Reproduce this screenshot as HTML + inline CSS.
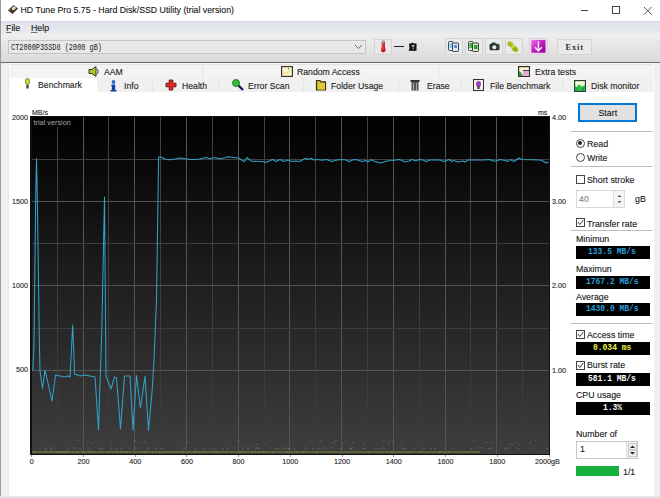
<!DOCTYPE html>
<html><head><meta charset="utf-8">
<style>
*{margin:0;padding:0;box-sizing:border-box}
html,body{width:660px;height:498px;overflow:hidden;background:#f0f0f0;font-family:"Liberation Sans",sans-serif;font-size:11px;color:#000}
.rp,.tab,.lbl,#title .t,#menu span{-webkit-text-stroke:0.2px rgba(40,40,40,0.6)}
.a{position:absolute}
#lb{left:0;top:0;width:1px;height:498px;background:#9a9a9a}
#title{left:1px;top:0;width:659px;height:21px;background:#fff}
#title .t{left:19.5px;top:5px;font-size:8.75px;color:#111;white-space:nowrap}
#menu{left:1px;top:21px;width:659px;height:15px;background:linear-gradient(#e0e4ea,#e6e9ee 70%,#eff0f2);border-top:1px solid #d6d9e2}
#menu span{position:absolute;top:0px;font-size:8.8px;color:#111}
#tool{left:1px;top:36px;width:659px;height:26px;background:linear-gradient(#ededed,#dadada)}
#darkline{left:1px;top:62px;width:659px;height:1px;background:#6a6a6a}
#combo{left:8px;top:40px;width:358px;height:14px;background:#e8e8e8;border:1px solid #c4c4c4}
.btn{position:absolute;background:#eaeaea;border:1px solid #d4d4d4}
#content{left:9px;top:92px;width:645px;height:404px;background:#fff}
.tabrow{position:absolute;background:#f3f3f3}
.tab{position:absolute;font-size:8.7px;color:#1a1a1a;white-space:nowrap}
.sep{position:absolute;width:1px;background:#e4e4e4}
.lbl{position:absolute;font-size:7.2px;color:#1e1e1e;white-space:nowrap}
.rp{position:absolute;margin-top:2px;font-size:8.8px;color:#111;white-space:nowrap}
.hr{position:absolute;left:571px;width:81px;height:1px;background:#bdbdbd}
.cb{position:absolute;width:9px;height:9px;border:1px solid #444;background:#fff}
.box{position:absolute;left:576px;width:74px;height:13px;background:#000}
.mono{position:absolute;font-family:"Liberation Mono",monospace;font-weight:bold;font-size:9.4px;transform:scaleX(0.85);-webkit-text-stroke:0px;white-space:nowrap;transform-origin:0 0}
</style></head><body>
<div class="a" id="lb"></div>
<div class="a" id="title">
  <svg class="a" style="left:0;top:0" width="20" height="20" viewBox="0 0 20 20"><path d="M7 10.5 L12.5 5 L17 8.5 L11.5 14 Z" fill="#3a3030"/><ellipse cx="12.8" cy="8.3" rx="2.2" ry="1.7" fill="#e6deb0" transform="rotate(-40 12.8 8.3)"/><path d="M7.5 10.5 L9.5 8.5 L10.5 11.5Z" fill="#6a5a40"/></svg>
  <div class="a t">HD Tune Pro 5.75 - Hard Disk/SSD Utility (trial version)</div>
  <div class="a" style="left:580px;top:10px;width:7px;height:1px;background:#444"></div>
  <div class="a" style="left:611px;top:6px;width:8px;height:8px;border:1px solid #444"></div>
  <svg class="a" style="left:642px;top:6px" width="9" height="9" viewBox="0 0 9 9"><path d="M1 1 L8.5 8.5 M8.5 1 L1 8.5" stroke="#444" stroke-width="0.9"/></svg>
</div>
<div class="a" id="menu">
  <span style="left:5px;top:1px"><u>F</u>ile</span>
  <span style="left:30px;top:1px"><u>H</u>elp</span>
</div>
<div class="a" id="tool"></div>
<div class="a" id="combo">
  <div class="a" style="left:2px;top:1px;font-family:'Liberation Mono',monospace;font-weight:normal;font-size:9.5px;color:#1a1a1a;white-space:nowrap;transform:scaleX(0.725);transform-origin:0 0">CT2000P3SSD8 (2000 gB)</div>
  <svg class="a" style="left:345px;top:3px" width="9" height="6" viewBox="0 0 9 6"><path d="M1 1 L4.5 4.5 L8 1" fill="none" stroke="#666" stroke-width="1"/></svg>
</div>
<div class="btn" style="left:374px;top:39px;width:18px;height:16px;background:#ebe8ec">
  <svg class="a" style="left:-1px;top:-1px" width="18" height="16" viewBox="374 39 18 16"><rect x="381.6" y="40.5" width="3.4" height="9" rx="1.7" fill="#d02828"/><rect x="382.2" y="40.8" width="2.2" height="2.6" fill="#88b8b0"/><circle cx="383.3" cy="50" r="2.4" fill="#c81c1c"/><rect x="382.4" y="44" width="0.8" height="6" fill="#f06060"/></svg>
</div>
<div class="a" style="left:394px;top:46px;width:10px;height:1px;background:#222"></div>
<svg class="a" style="left:406px;top:41px" width="12" height="11" viewBox="406 41 12 11"><path d="M409 43.5 H416.5 V50.8 H408.5 L409.5 48.5 Z" fill="#111"/><rect x="411.5" y="42.8" width="2" height="1.5" fill="#111"/><rect x="411.8" y="45" width="2.5" height="1.6" fill="#ddd"/><rect x="412.5" y="47.5" width="1.4" height="1.4" fill="#bbb"/></svg>
<div class="btn" style="left:445px;top:38px;width:18px;height:17px">
  <svg class="a" style="left:-1px;top:-1px" width="18" height="17" viewBox="445 38 18 17"><rect x="448.5" y="41.5" width="4.5" height="9" rx="0.8" fill="#d8f0fa" stroke="#4a4a50"/><rect x="449.5" y="43" width="2.5" height="5" fill="#8ccbe8"/><rect x="452.5" y="43" width="6" height="8.5" rx="0.8" fill="#dfe6f6" stroke="#3e3e46"/><rect x="454" y="45" width="3" height="3" fill="#5a8ad0"/></svg>
</div>
<div class="btn" style="left:465px;top:38px;width:18px;height:17px">
  <svg class="a" style="left:-1px;top:-1px" width="18" height="17" viewBox="465 38 18 17"><rect x="468.5" y="41.5" width="4.5" height="9" rx="0.8" fill="#d6efd0" stroke="#4a4a4a"/><rect x="469.5" y="43" width="2.5" height="5" fill="#3fb03a"/><rect x="472.5" y="43" width="6" height="8.5" rx="0.8" fill="#dde8cc" stroke="#3a3a3a"/><rect x="474" y="45" width="3.5" height="4" fill="#2f9a3a"/></svg>
</div>
<div class="btn" style="left:485px;top:38px;width:18px;height:17px">
  <svg class="a" style="left:-1px;top:-1px" width="18" height="17" viewBox="485 38 18 17"><path d="M491.2 44 Q491.5 42.2 493.5 42.2 Q495.8 42.2 496.2 44Z" fill="#2e3b33"/><rect x="489.5" y="43.8" width="10" height="6.4" rx="1.2" fill="#2b3a31"/><circle cx="494.3" cy="47.2" r="2" fill="#e8efe8"/><rect x="497.5" y="44.5" width="1.5" height="1" fill="#6a8a70"/></svg>
</div>
<div class="btn" style="left:505px;top:38px;width:18px;height:17px">
  <svg class="a" style="left:-1px;top:-1px" width="18" height="17" viewBox="505 38 18 17"><ellipse cx="510.5" cy="44.3" rx="3.4" ry="2.6" fill="#b4c020" transform="rotate(40 510.5 44.3)"/><ellipse cx="515" cy="49" rx="3.6" ry="2.7" fill="#a8b818" transform="rotate(40 515 49)"/><ellipse cx="512.8" cy="46.6" rx="2" ry="1.6" fill="#c8d838" transform="rotate(40 512.8 46.6)"/><path d="M509 43.5 L511.5 46 M513.5 47.8 L516 50.2" stroke="#7a8810" stroke-width="0.8"/></svg>
</div>
<div class="btn" style="left:529px;top:38px;width:19px;height:17px">
  <svg class="a" style="left:-1px;top:-1px" width="19" height="17" viewBox="529 38 19 17"><defs><linearGradient id="pg" x1="0" y1="0" x2="1" y2="1"><stop offset="0" stop-color="#e870e8"/><stop offset="0.5" stop-color="#c020c0"/><stop offset="1" stop-color="#900090"/></linearGradient></defs><rect x="530.5" y="39.5" width="16" height="14" fill="#f4d0f4"/><rect x="531.3" y="40" width="14.2" height="12.8" rx="0.8" fill="url(#pg)"/><path d="M538.4 41.5 V50.5 M535 47.2 L538.4 50.8 L541.8 47.2" stroke="#fbe8fb" stroke-width="1.5" fill="none"/></svg>
</div>
<div class="btn" style="left:557px;top:39px;width:35px;height:16px">
  <div class="a" style="left:7.5px;top:3px;font-family:'Liberation Serif',serif;font-weight:bold;font-size:8.4px;letter-spacing:0.9px;color:#333;white-space:nowrap">Exit</div>
</div>
<div class="a" id="darkline"></div>
<div class="a" style="left:1px;top:63px;width:8px;height:435px;background:linear-gradient(90deg,#f0f0f0 85%,#e6e6e6)"></div>
<div class="a" style="left:9px;top:63px;width:645px;height:29px;background:#fafafa"></div>
<div class="a" style="left:654px;top:63px;width:6px;height:435px;background:#f0f0f0"></div>
<div class="a" style="left:0;top:496px;width:660px;height:2px;background:#e6e6e6"></div>
<div class="a" id="content"></div>

<!-- tab rows -->
<div class="tabrow" style="left:10px;top:64px;width:643px;height:14px;border-top:1px solid #e2e2e2"></div>
<div class="sep" style="left:202px;top:64px;height:14px"></div>
<div class="sep" style="left:438px;top:64px;height:14px"></div>
<div class="tabrow" style="left:97px;top:78px;width:556px;height:14px;background:#f0f0f0"></div>
<div class="a" style="left:10px;top:78px;width:87px;height:16px;background:#fff"></div>
<div class="sep" style="left:152px;top:78px;height:14px"></div>
<div class="sep" style="left:218px;top:78px;height:14px"></div>
<div class="sep" style="left:303px;top:78px;height:14px"></div>
<div class="sep" style="left:398px;top:78px;height:14px"></div>
<div class="sep" style="left:461px;top:78px;height:14px"></div>
<div class="sep" style="left:562px;top:78px;height:14px"></div>

<!-- row1 tabs -->
<svg class="a" style="left:88px;top:66px" width="12" height="11" viewBox="0 0 12 11"><path d="M1 3.5 H4 L8 0.5 V10.5 L4 7.5 H1Z" fill="#b8c820" stroke="#333" stroke-width="1"/><path d="M9.5 3 Q11 5.5 9.5 8" stroke="#444" fill="none"/></svg>
<div class="tab" style="left:104px;top:67px">AAM</div>
<svg class="a" style="left:281px;top:66px" width="12" height="11" viewBox="0 0 12 11"><rect x="0.6" y="0.6" width="10.8" height="9.8" fill="#f8f4c8" stroke="#2a2a20" stroke-width="1.1"/><path d="M2 8 L4 6.5 L6 7.5 L9 4" stroke="#f0b040" stroke-width="1" fill="none" stroke-dasharray="1 1"/><rect x="7" y="2" width="1" height="1.5" fill="#40a040"/></svg>
<div class="tab" style="left:297px;top:67px">Random Access</div>
<svg class="a" style="left:518px;top:66px" width="12" height="11" viewBox="0 0 12 11"><rect x="0.6" y="0.6" width="10.8" height="9.8" fill="#f4f6c4" stroke="#222" stroke-width="1.1"/><path d="M1 10 V5 L3 6.5 L5 10Z" fill="#30a040"/><rect x="5" y="4.5" width="6" height="5.5" fill="#e8a8d8"/><rect x="5" y="4" width="6" height="1" fill="#3a3a80"/></svg>
<div class="tab" style="left:535px;top:67px">Extra tests</div>

<!-- row2 tabs -->
<svg class="a" style="left:25px;top:78px" width="5" height="11" viewBox="0 0 5 11"><ellipse cx="2.5" cy="3.5" rx="2.3" ry="3.3" fill="#c8d820" stroke="#555" stroke-width="0.6"/><rect x="1.3" y="7" width="2.4" height="3.5" fill="#444"/></svg>
<div class="tab" style="left:38px;top:80px">Benchmark</div>
<svg class="a" style="left:110px;top:79.5px" width="7" height="12" viewBox="0 0 7 12"><circle cx="3.5" cy="2" r="1.9" fill="#2a70c8"/><path d="M1.5 4.6 H5.2 V10 H6.5 V11.5 H0.5 V10 H1.8 V6 H1.2Z" fill="#1440a8"/></svg>
<div class="tab" style="left:124px;top:81px">Info</div>
<svg class="a" style="left:165px;top:79px" width="12" height="12" viewBox="0 0 12 12"><path d="M4.2 1 H7.8 V4.2 H11 V7.8 H7.8 V11 H4.2 V7.8 H1 V4.2 H4.2Z" fill="#e02828" stroke="#6a1010" stroke-width="0.9"/></svg>
<div class="tab" style="left:182px;top:81px">Health</div>
<svg class="a" style="left:232px;top:79px" width="12" height="12" viewBox="0 0 12 12"><path d="M5.5 5.5 L11 11" stroke="#1a1a60" stroke-width="2.4"/><circle cx="4" cy="4" r="3.5" fill="#30c030" stroke="#206020" stroke-width="0.8"/></svg>
<div class="tab" style="left:248px;top:81px">Error Scan</div>
<svg class="a" style="left:315px;top:79px" width="12" height="12" viewBox="0 0 12 12"><path d="M1.5 1.5 H5 L6 2.8 H10.5 V11 H1.5Z" fill="#b8b848" stroke="#3a3418" stroke-width="1.2"/><rect x="3" y="4" width="7" height="6.5" fill="#e4c830"/></svg>
<div class="tab" style="left:331px;top:81px">Folder Usage</div>
<svg class="a" style="left:410px;top:79px" width="10" height="12" viewBox="0 0 10 12"><rect x="0.5" y="1" width="9" height="2" fill="#333"/><rect x="1.5" y="3" width="7" height="8.5" fill="#555"/><path d="M3.5 4 V11 M6.5 4 V11" stroke="#bbb" stroke-width="0.8"/></svg>
<div class="tab" style="left:427px;top:81px">Erase</div>
<svg class="a" style="left:473px;top:79px" width="11" height="12" viewBox="0 0 11 12"><rect x="0.5" y="0.5" width="10" height="11" fill="#f4f0e8" stroke="#333"/><ellipse cx="5.5" cy="5" rx="2.5" ry="3" fill="#a040c0"/><rect x="4.5" y="7" width="2" height="3" fill="#333"/></svg>
<div class="tab" style="left:490px;top:81px">File Benchmark</div>
<svg class="a" style="left:574px;top:79.5px" width="12" height="12" viewBox="0 0 12 12"><rect x="0.6" y="0.6" width="10.8" height="10.8" fill="#f4f8d8" stroke="#1e3a22" stroke-width="1.1"/><path d="M1 11 V6 L3 7 L4 5 L6 4.5 L7 6.5 L9 6 L11 5 V11Z" fill="#28c040"/><path d="M1.5 11 V8.5 H3 V11Z M8 11 V8 H10 V11Z" fill="#2a8a6a"/></svg>
<div class="tab" style="left:591px;top:81px">Disk monitor</div>

<!-- chart -->
<svg class="a" style="left:0;top:0" width="660" height="498" viewBox="0 0 660 498">
  <defs><linearGradient id="g" x1="0" y1="0" x2="0" y2="1"><stop offset="0" stop-color="#000"/><stop offset="1" stop-color="#3e3e3e"/></linearGradient></defs>
  <rect x="30" y="116" width="520" height="339" fill="#111"/>
  <rect x="32" y="117" width="517" height="337" fill="url(#g)"/>
  <g stroke="#5c5c5c" stroke-width="1">
  <defs><linearGradient id="mg" gradientUnits="userSpaceOnUse" x1="0" y1="117" x2="0" y2="454"><stop offset="0" stop-color="#424242"/><stop offset="1" stop-color="#3a3a3a"/></linearGradient></defs>
<line x1="57.5" y1="117" x2="57.5" y2="454" stroke="url(#mg)"/>
<line x1="83.5" y1="117" x2="83.5" y2="454" stroke="#545454"/>
<line x1="108.5" y1="117" x2="108.5" y2="454" stroke="url(#mg)"/>
<line x1="134.5" y1="117" x2="134.5" y2="454" stroke="#545454"/>
<line x1="160.5" y1="117" x2="160.5" y2="454" stroke="url(#mg)"/>
<line x1="186.5" y1="117" x2="186.5" y2="454" stroke="#545454"/>
<line x1="212.5" y1="117" x2="212.5" y2="454" stroke="url(#mg)"/>
<line x1="238.5" y1="117" x2="238.5" y2="454" stroke="#545454"/>
<line x1="264.5" y1="117" x2="264.5" y2="454" stroke="url(#mg)"/>
<line x1="289.5" y1="117" x2="289.5" y2="454" stroke="#545454"/>
<line x1="315.5" y1="117" x2="315.5" y2="454" stroke="url(#mg)"/>
<line x1="341.5" y1="117" x2="341.5" y2="454" stroke="#545454"/>
<line x1="367.5" y1="117" x2="367.5" y2="454" stroke="url(#mg)"/>
<line x1="393.5" y1="117" x2="393.5" y2="454" stroke="#545454"/>
<line x1="419.5" y1="117" x2="419.5" y2="454" stroke="url(#mg)"/>
<line x1="445.5" y1="117" x2="445.5" y2="454" stroke="#545454"/>
<line x1="470.5" y1="117" x2="470.5" y2="454" stroke="url(#mg)"/>
<line x1="496.5" y1="117" x2="496.5" y2="454" stroke="#545454"/>
<line x1="522.5" y1="117" x2="522.5" y2="454" stroke="url(#mg)"/>
<line x1="32" y1="159.5" x2="549" y2="159.5" stroke="#404040"/>
<line x1="32" y1="201.5" x2="549" y2="201.5" stroke="#545454"/>
<line x1="32" y1="243.5" x2="549" y2="243.5" stroke="#3e3e3e"/>
<line x1="32" y1="285.5" x2="549" y2="285.5" stroke="#545454"/>
<line x1="32" y1="328.5" x2="549" y2="328.5" stroke="#3c3c3c"/>
<line x1="32" y1="370.5" x2="549" y2="370.5" stroke="#545454"/>
<line x1="32" y1="412.5" x2="549" y2="412.5" stroke="#3a3a3a"/>
  </g>
  <g fill="#c8c84a">
  <rect x="32" y="451" width="448" height="2" fill="#5a6038"/>
<rect x="154.8" y="448.0" width="1.3" height="1" fill="#6a6a4a"/>
<rect x="504.6" y="448.5" width="1.3" height="1" fill="#6a6a4a"/>
<rect x="65.8" y="451.5" width="1.3" height="1" fill="#7a7c48"/>
<rect x="165.8" y="451.5" width="1.3" height="1" fill="#7a7c48"/>
<rect x="274.7" y="448.0" width="1.3" height="1" fill="#6a6a4a"/>
<rect x="236.9" y="440.9" width="1.3" height="1" fill="#66664a"/>
<rect x="110.2" y="441.6" width="1.3" height="1" fill="#66664a"/>
<rect x="39.8" y="447.5" width="1.3" height="1" fill="#6a6a4a"/>
<rect x="423.2" y="448.0" width="1.3" height="1" fill="#6a6a4a"/>
<rect x="434.5" y="448.0" width="1.3" height="1" fill="#6a6a4a"/>
<rect x="275.9" y="448.0" width="1.3" height="1" fill="#6a6a4a"/>
<rect x="400.5" y="441.6" width="1.3" height="1" fill="#66664a"/>
<rect x="445.3" y="451.5" width="1.3" height="1" fill="#7a7c48"/>
<rect x="92.9" y="451.5" width="1.3" height="1" fill="#7a7c48"/>
<rect x="144.0" y="441.7" width="1.3" height="1" fill="#66664a"/>
<rect x="259.2" y="451.5" width="1.3" height="1" fill="#7a7c48"/>
<rect x="231.1" y="451.5" width="1.3" height="1" fill="#7a7c48"/>
<rect x="333.5" y="442.7" width="1.3" height="1" fill="#66664a"/>
<rect x="511.3" y="444.0" width="1.3" height="1" fill="#66664a"/>
<rect x="378.4" y="451.5" width="1.3" height="1" fill="#7a7c48"/>
<rect x="529.8" y="442.3" width="1.3" height="1" fill="#66664a"/>
<rect x="400.3" y="451.5" width="1.3" height="1" fill="#7a7c48"/>
<rect x="60.4" y="451.5" width="1.3" height="1" fill="#7a7c48"/>
<rect x="472.6" y="440.4" width="1.3" height="1" fill="#66664a"/>
<rect x="99.5" y="451.5" width="1.3" height="1" fill="#7a7c48"/>
<rect x="183.6" y="447.5" width="1.3" height="1" fill="#6a6a4a"/>
<rect x="54.8" y="447.5" width="1.3" height="1" fill="#6a6a4a"/>
<rect x="226.9" y="448.5" width="1.3" height="1" fill="#6a6a4a"/>
<rect x="486.5" y="442.0" width="1.3" height="1" fill="#66664a"/>
<rect x="66.5" y="451.5" width="1.3" height="1" fill="#7a7c48"/>
<rect x="120.4" y="451.5" width="1.3" height="1" fill="#7a7c48"/>
<rect x="242.5" y="447.5" width="1.3" height="1" fill="#6a6a4a"/>
<rect x="387.9" y="441.4" width="1.3" height="1" fill="#66664a"/>
<rect x="217.9" y="451.5" width="1.3" height="1" fill="#7a7c48"/>
<rect x="226.4" y="441.5" width="1.3" height="1" fill="#66664a"/>
<rect x="479.3" y="447.5" width="1.3" height="1" fill="#6a6a4a"/>
<rect x="352.0" y="442.0" width="1.3" height="1" fill="#66664a"/>
<rect x="254.5" y="447.5" width="1.3" height="1" fill="#6a6a4a"/>
<rect x="147.7" y="451.5" width="1.3" height="1" fill="#7a7c48"/>
<rect x="188.3" y="451.5" width="1.3" height="1" fill="#7a7c48"/>
<rect x="200.7" y="451.5" width="1.3" height="1" fill="#7a7c48"/>
<rect x="315.8" y="451.5" width="1.3" height="1" fill="#7a7c48"/>
<rect x="203.5" y="451.5" width="1.3" height="1" fill="#7a7c48"/>
<rect x="251.3" y="451.5" width="1.3" height="1" fill="#7a7c48"/>
<rect x="336.1" y="440.1" width="1.3" height="1" fill="#66664a"/>
<rect x="222.5" y="448.0" width="1.3" height="1" fill="#6a6a4a"/>
<rect x="195.1" y="451.5" width="1.3" height="1" fill="#7a7c48"/>
<rect x="193.3" y="451.5" width="1.3" height="1" fill="#7a7c48"/>
<rect x="187.0" y="451.5" width="1.3" height="1" fill="#7a7c48"/>
<rect x="45.9" y="448.5" width="1.3" height="1" fill="#6a6a4a"/>
<rect x="99.8" y="448.5" width="1.3" height="1" fill="#6a6a4a"/>
<rect x="116.0" y="451.5" width="1.3" height="1" fill="#7a7c48"/>
<rect x="256.6" y="447.5" width="1.3" height="1" fill="#6a6a4a"/>
<rect x="342.0" y="442.7" width="1.3" height="1" fill="#66664a"/>
<rect x="147.8" y="447.5" width="1.3" height="1" fill="#6a6a4a"/>
<rect x="73.3" y="447.5" width="1.3" height="1" fill="#6a6a4a"/>
<rect x="488.6" y="447.5" width="1.3" height="1" fill="#6a6a4a"/>
<rect x="438.1" y="451.5" width="1.3" height="1" fill="#7a7c48"/>
<rect x="194.6" y="448.5" width="1.3" height="1" fill="#6a6a4a"/>
<rect x="126.7" y="451.5" width="1.3" height="1" fill="#7a7c48"/>
<rect x="363.2" y="448.0" width="1.3" height="1" fill="#6a6a4a"/>
<rect x="264.2" y="451.5" width="1.3" height="1" fill="#7a7c48"/>
<rect x="470.6" y="448.5" width="1.3" height="1" fill="#6a6a4a"/>
<rect x="215.5" y="451.5" width="1.3" height="1" fill="#7a7c48"/>
<rect x="34.1" y="451.5" width="1.3" height="1" fill="#7a7c48"/>
<rect x="518.7" y="443.9" width="1.3" height="1" fill="#66664a"/>
<rect x="256.1" y="443.7" width="1.3" height="1" fill="#66664a"/>
<rect x="146.6" y="448.5" width="1.3" height="1" fill="#6a6a4a"/>
<rect x="418.0" y="442.2" width="1.3" height="1" fill="#66664a"/>
<rect x="491.1" y="443.4" width="1.3" height="1" fill="#66664a"/>
<rect x="141.6" y="451.5" width="1.3" height="1" fill="#7a7c48"/>
<rect x="50.1" y="448.5" width="1.3" height="1" fill="#6a6a4a"/>
<rect x="508.7" y="443.6" width="1.3" height="1" fill="#66664a"/>
<rect x="329.7" y="451.5" width="1.3" height="1" fill="#7a7c48"/>
<rect x="120.7" y="451.5" width="1.3" height="1" fill="#7a7c48"/>
<rect x="302.9" y="451.5" width="1.3" height="1" fill="#7a7c48"/>
<rect x="145.1" y="451.5" width="1.3" height="1" fill="#7a7c48"/>
<rect x="476.6" y="447.5" width="1.3" height="1" fill="#6a6a4a"/>
<rect x="213.6" y="451.5" width="1.3" height="1" fill="#7a7c48"/>
<rect x="386.7" y="451.5" width="1.3" height="1" fill="#7a7c48"/>
<rect x="507.6" y="447.5" width="1.3" height="1" fill="#6a6a4a"/>
<rect x="283.6" y="448.0" width="1.3" height="1" fill="#6a6a4a"/>
<rect x="57.8" y="451.5" width="1.3" height="1" fill="#7a7c48"/>
<rect x="243.9" y="451.5" width="1.3" height="1" fill="#7a7c48"/>
<rect x="56.6" y="451.5" width="1.3" height="1" fill="#7a7c48"/>
<rect x="62.7" y="451.5" width="1.3" height="1" fill="#7a7c48"/>
<rect x="534.9" y="440.3" width="1.3" height="1" fill="#66664a"/>
<rect x="172.9" y="451.5" width="1.3" height="1" fill="#7a7c48"/>
<rect x="213.3" y="448.5" width="1.3" height="1" fill="#6a6a4a"/>
<rect x="188.9" y="451.5" width="1.3" height="1" fill="#7a7c48"/>
<rect x="33.6" y="451.5" width="1.3" height="1" fill="#7a7c48"/>
<rect x="405.1" y="448.5" width="1.3" height="1" fill="#6a6a4a"/>
<rect x="124.1" y="451.5" width="1.3" height="1" fill="#7a7c48"/>
<rect x="390.9" y="451.5" width="1.3" height="1" fill="#7a7c48"/>
<rect x="198.8" y="451.5" width="1.3" height="1" fill="#7a7c48"/>
<rect x="288.0" y="448.0" width="1.3" height="1" fill="#6a6a4a"/>
<rect x="40.0" y="451.5" width="1.3" height="1" fill="#7a7c48"/>
<rect x="144.8" y="451.5" width="1.3" height="1" fill="#7a7c48"/>
<rect x="90.4" y="451.5" width="1.3" height="1" fill="#7a7c48"/>
<rect x="46.5" y="451.5" width="1.3" height="1" fill="#7a7c48"/>
<rect x="320.5" y="440.5" width="1.3" height="1" fill="#66664a"/>
<rect x="388.3" y="442.9" width="1.3" height="1" fill="#66664a"/>
<rect x="470.5" y="448.0" width="1.3" height="1" fill="#6a6a4a"/>
<rect x="376.5" y="448.5" width="1.3" height="1" fill="#6a6a4a"/>
<rect x="306.5" y="448.5" width="1.3" height="1" fill="#6a6a4a"/>
<rect x="34.5" y="451.5" width="1.3" height="1" fill="#7a7c48"/>
<rect x="54.9" y="451.5" width="1.3" height="1" fill="#7a7c48"/>
<rect x="42.5" y="451.5" width="1.3" height="1" fill="#7a7c48"/>
<rect x="410.1" y="451.5" width="1.3" height="1" fill="#7a7c48"/>
<rect x="379.5" y="448.0" width="1.3" height="1" fill="#6a6a4a"/>
<rect x="330.8" y="447.5" width="1.3" height="1" fill="#6a6a4a"/>
<rect x="546.1" y="448.5" width="1.3" height="1" fill="#6a6a4a"/>
<rect x="367.5" y="451.5" width="1.3" height="1" fill="#7a7c48"/>
<rect x="177.3" y="451.5" width="1.3" height="1" fill="#7a7c48"/>
<rect x="323.0" y="447.5" width="1.3" height="1" fill="#6a6a4a"/>
<rect x="547.1" y="448.0" width="1.3" height="1" fill="#6a6a4a"/>
<rect x="349.8" y="448.0" width="1.3" height="1" fill="#6a6a4a"/>
<rect x="162.5" y="448.0" width="1.3" height="1" fill="#6a6a4a"/>
<rect x="319.2" y="441.5" width="1.3" height="1" fill="#66664a"/>
<rect x="153.4" y="443.4" width="1.3" height="1" fill="#66664a"/>
<rect x="286.6" y="451.5" width="1.3" height="1" fill="#7a7c48"/>
<rect x="331.2" y="442.7" width="1.3" height="1" fill="#66664a"/>
<rect x="112.6" y="451.5" width="1.3" height="1" fill="#7a7c48"/>
<rect x="115.9" y="448.0" width="1.3" height="1" fill="#6a6a4a"/>
<rect x="505.0" y="448.0" width="1.3" height="1" fill="#6a6a4a"/>
<rect x="334.6" y="440.5" width="1.3" height="1" fill="#66664a"/>
<rect x="263.0" y="451.5" width="1.3" height="1" fill="#7a7c48"/>
<rect x="514.4" y="442.2" width="1.3" height="1" fill="#66664a"/>
<rect x="434.2" y="448.0" width="1.3" height="1" fill="#6a6a4a"/>
<rect x="339.1" y="448.0" width="1.3" height="1" fill="#6a6a4a"/>
<rect x="152.1" y="451.5" width="1.3" height="1" fill="#7a7c48"/>
<rect x="287.3" y="451.5" width="1.3" height="1" fill="#7a7c48"/>
<rect x="155.2" y="447.5" width="1.3" height="1" fill="#6a6a4a"/>
<rect x="247.9" y="448.5" width="1.3" height="1" fill="#6a6a4a"/>
<rect x="341.1" y="448.5" width="1.3" height="1" fill="#6a6a4a"/>
<rect x="319.5" y="448.5" width="1.3" height="1" fill="#6a6a4a"/>
<rect x="69.3" y="443.1" width="1.3" height="1" fill="#66664a"/>
<rect x="440.1" y="451.5" width="1.3" height="1" fill="#7a7c48"/>
<rect x="491.8" y="448.5" width="1.3" height="1" fill="#6a6a4a"/>
<rect x="67.7" y="451.5" width="1.3" height="1" fill="#7a7c48"/>
<rect x="491.3" y="447.5" width="1.3" height="1" fill="#6a6a4a"/>
<rect x="128.6" y="447.5" width="1.3" height="1" fill="#6a6a4a"/>
<rect x="419.6" y="451.5" width="1.3" height="1" fill="#7a7c48"/>
<rect x="193.7" y="451.5" width="1.3" height="1" fill="#7a7c48"/>
<rect x="76.3" y="451.5" width="1.3" height="1" fill="#7a7c48"/>
<rect x="182.5" y="451.5" width="1.3" height="1" fill="#7a7c48"/>
<rect x="182.0" y="451.5" width="1.3" height="1" fill="#7a7c48"/>
<rect x="257.1" y="447.5" width="1.3" height="1" fill="#6a6a4a"/>
<rect x="364.5" y="448.0" width="1.3" height="1" fill="#6a6a4a"/>
<rect x="233.7" y="447.5" width="1.3" height="1" fill="#6a6a4a"/>
<rect x="225.8" y="451.5" width="1.3" height="1" fill="#7a7c48"/>
<rect x="258.2" y="448.0" width="1.3" height="1" fill="#6a6a4a"/>
<rect x="82.0" y="441.5" width="1.3" height="1" fill="#66664a"/>
<rect x="430.6" y="448.0" width="1.3" height="1" fill="#6a6a4a"/>
<rect x="374.1" y="448.0" width="1.3" height="1" fill="#6a6a4a"/>
<rect x="87.3" y="441.4" width="1.3" height="1" fill="#66664a"/>
<rect x="324.1" y="448.5" width="1.3" height="1" fill="#6a6a4a"/>
<rect x="286.8" y="451.5" width="1.3" height="1" fill="#7a7c48"/>
<rect x="382.1" y="447.5" width="1.3" height="1" fill="#6a6a4a"/>
<rect x="365.3" y="447.5" width="1.3" height="1" fill="#6a6a4a"/>
<rect x="124.4" y="442.6" width="1.3" height="1" fill="#66664a"/>
<rect x="95.5" y="440.6" width="1.3" height="1" fill="#66664a"/>
<rect x="203.1" y="448.5" width="1.3" height="1" fill="#6a6a4a"/>
<rect x="115.7" y="451.5" width="1.3" height="1" fill="#7a7c48"/>
<rect x="280.9" y="448.5" width="1.3" height="1" fill="#6a6a4a"/>
<rect x="67.4" y="448.5" width="1.3" height="1" fill="#6a6a4a"/>
<rect x="312.3" y="448.0" width="1.3" height="1" fill="#6a6a4a"/>
<rect x="56.0" y="451.5" width="1.3" height="1" fill="#7a7c48"/>
<rect x="102.4" y="448.0" width="1.3" height="1" fill="#6a6a4a"/>
<rect x="159.6" y="448.0" width="1.3" height="1" fill="#6a6a4a"/>
<rect x="483.6" y="441.8" width="1.3" height="1" fill="#66664a"/>
<rect x="255.1" y="451.5" width="1.3" height="1" fill="#7a7c48"/>
<rect x="296.4" y="451.5" width="1.3" height="1" fill="#7a7c48"/>
<rect x="383.6" y="448.5" width="1.3" height="1" fill="#6a6a4a"/>
<rect x="89.8" y="448.5" width="1.3" height="1" fill="#6a6a4a"/>
<rect x="247.0" y="448.5" width="1.3" height="1" fill="#6a6a4a"/>
<rect x="98.3" y="448.0" width="1.3" height="1" fill="#6a6a4a"/>
<rect x="443.9" y="447.5" width="1.3" height="1" fill="#6a6a4a"/>
<rect x="144.1" y="451.5" width="1.3" height="1" fill="#7a7c48"/>
<rect x="391.8" y="451.5" width="1.3" height="1" fill="#7a7c48"/>
<rect x="491.9" y="441.5" width="1.3" height="1" fill="#66664a"/>
<rect x="317.1" y="448.5" width="1.3" height="1" fill="#6a6a4a"/>
<rect x="288.9" y="448.5" width="1.3" height="1" fill="#6a6a4a"/>
<rect x="186.5" y="441.9" width="1.3" height="1" fill="#66664a"/>
<rect x="342.3" y="447.5" width="1.3" height="1" fill="#6a6a4a"/>
<rect x="87.5" y="447.5" width="1.3" height="1" fill="#6a6a4a"/>
<rect x="285.8" y="448.0" width="1.3" height="1" fill="#6a6a4a"/>
<rect x="134.6" y="447.5" width="1.3" height="1" fill="#6a6a4a"/>
<rect x="51.1" y="448.5" width="1.3" height="1" fill="#6a6a4a"/>
<rect x="158.9" y="451.5" width="1.3" height="1" fill="#7a7c48"/>
<rect x="241.3" y="451.5" width="1.3" height="1" fill="#7a7c48"/>
<rect x="77.8" y="440.1" width="1.3" height="1" fill="#66664a"/>
<rect x="351.1" y="448.0" width="1.3" height="1" fill="#6a6a4a"/>
<rect x="310.1" y="441.3" width="1.3" height="1" fill="#66664a"/>
<rect x="481.2" y="447.5" width="1.3" height="1" fill="#6a6a4a"/>
<rect x="73.5" y="447.5" width="1.3" height="1" fill="#6a6a4a"/>
<rect x="401.4" y="448.0" width="1.3" height="1" fill="#6a6a4a"/>
<rect x="60.4" y="451.5" width="1.3" height="1" fill="#7a7c48"/>
<rect x="135.2" y="447.5" width="1.3" height="1" fill="#6a6a4a"/>
<rect x="51.1" y="451.5" width="1.3" height="1" fill="#7a7c48"/>
<rect x="72.2" y="451.5" width="1.3" height="1" fill="#7a7c48"/>
<rect x="288.5" y="448.5" width="1.3" height="1" fill="#6a6a4a"/>
<rect x="251.1" y="451.5" width="1.3" height="1" fill="#7a7c48"/>
<rect x="44.1" y="448.5" width="1.3" height="1" fill="#6a6a4a"/>
<rect x="239.2" y="451.5" width="1.3" height="1" fill="#7a7c48"/>
<rect x="198.2" y="451.5" width="1.3" height="1" fill="#7a7c48"/>
<rect x="305.1" y="447.5" width="1.3" height="1" fill="#6a6a4a"/>
<rect x="532.4" y="448.0" width="1.3" height="1" fill="#6a6a4a"/>
<rect x="238.1" y="451.5" width="1.3" height="1" fill="#7a7c48"/>
<rect x="108.5" y="451.5" width="1.3" height="1" fill="#7a7c48"/>
<rect x="44.3" y="451.5" width="1.3" height="1" fill="#7a7c48"/>
<rect x="88.8" y="451.5" width="1.3" height="1" fill="#7a7c48"/>
<rect x="62.8" y="451.5" width="1.3" height="1" fill="#7a7c48"/>
<rect x="242.4" y="447.5" width="1.3" height="1" fill="#6a6a4a"/>
<rect x="155.4" y="451.5" width="1.3" height="1" fill="#7a7c48"/>
<rect x="501.0" y="441.0" width="1.3" height="1" fill="#66664a"/>
<rect x="181.2" y="451.5" width="1.3" height="1" fill="#7a7c48"/>
<rect x="91.9" y="442.4" width="1.3" height="1" fill="#66664a"/>
<rect x="448.7" y="451.5" width="1.3" height="1" fill="#7a7c48"/>
<rect x="518.1" y="448.0" width="1.3" height="1" fill="#6a6a4a"/>
<rect x="284.1" y="447.5" width="1.3" height="1" fill="#6a6a4a"/>
<rect x="452.4" y="448.0" width="1.3" height="1" fill="#6a6a4a"/>
<rect x="195.6" y="451.5" width="1.3" height="1" fill="#7a7c48"/>
<rect x="78.1" y="447.5" width="1.3" height="1" fill="#6a6a4a"/>
<rect x="47.6" y="451.5" width="1.3" height="1" fill="#7a7c48"/>
<rect x="50.9" y="451.5" width="1.3" height="1" fill="#7a7c48"/>
<rect x="468.3" y="451.5" width="1.3" height="1" fill="#7a7c48"/>
<rect x="278.1" y="448.0" width="1.3" height="1" fill="#6a6a4a"/>
<rect x="168.5" y="451.5" width="1.3" height="1" fill="#7a7c48"/>
<rect x="345.2" y="440.4" width="1.3" height="1" fill="#66664a"/>
<rect x="183.4" y="447.5" width="1.3" height="1" fill="#6a6a4a"/>
<rect x="293.9" y="448.5" width="1.3" height="1" fill="#6a6a4a"/>
<rect x="382.9" y="440.7" width="1.3" height="1" fill="#66664a"/>
<rect x="413.7" y="448.5" width="1.3" height="1" fill="#6a6a4a"/>
<rect x="217.4" y="451.5" width="1.3" height="1" fill="#7a7c48"/>
<rect x="258.2" y="451.5" width="1.3" height="1" fill="#7a7c48"/>
<rect x="210.1" y="448.5" width="1.3" height="1" fill="#6a6a4a"/>
<rect x="403.8" y="448.5" width="1.3" height="1" fill="#6a6a4a"/>
<rect x="391.6" y="440.2" width="1.3" height="1" fill="#66664a"/>
<rect x="120.6" y="448.0" width="1.3" height="1" fill="#6a6a4a"/>
<rect x="79.5" y="448.5" width="1.3" height="1" fill="#6a6a4a"/>
<rect x="82.1" y="451.5" width="1.3" height="1" fill="#7a7c48"/>
<rect x="363.5" y="443.5" width="1.3" height="1" fill="#66664a"/>
<rect x="264.2" y="442.9" width="1.3" height="1" fill="#66664a"/>
<rect x="64.3" y="451.5" width="1.3" height="1" fill="#7a7c48"/>
<rect x="238.1" y="440.4" width="1.3" height="1" fill="#66664a"/>
<rect x="68.2" y="451.5" width="1.3" height="1" fill="#7a7c48"/>
<rect x="53.9" y="451.5" width="1.3" height="1" fill="#7a7c48"/>
<rect x="110.8" y="448.5" width="1.3" height="1" fill="#6a6a4a"/>
<rect x="160.8" y="451.5" width="1.3" height="1" fill="#7a7c48"/>
<rect x="139.7" y="442.1" width="1.3" height="1" fill="#66664a"/>
<rect x="292.5" y="441.3" width="1.3" height="1" fill="#66664a"/>
<rect x="487.6" y="448.0" width="1.3" height="1" fill="#6a6a4a"/>
<rect x="123.6" y="451.5" width="1.3" height="1" fill="#7a7c48"/>
<rect x="90.1" y="451.5" width="1.3" height="1" fill="#7a7c48"/>
<rect x="134.8" y="440.3" width="1.3" height="1" fill="#66664a"/>
<rect x="272.1" y="451.5" width="1.3" height="1" fill="#7a7c48"/>
<rect x="349.6" y="448.5" width="1.3" height="1" fill="#6a6a4a"/>
<rect x="302.2" y="451.5" width="1.3" height="1" fill="#7a7c48"/>
<rect x="261.9" y="451.5" width="1.3" height="1" fill="#7a7c48"/>
  </g>
  <path d="M32.8,371.0 L34.0,345.0 L35.8,190.0 L36.5,158.5 L37.2,190.0 L39.4,345.0 L40.0,371.0 L42.5,388.5 L45.0,370.0 L52.0,401.0 L55.6,375.0 L60.0,376.0 L64.0,377.0 L68.0,376.0 L70.0,377.0 L72.7,325.0 L74.6,374.0 L80.0,376.0 L85.0,375.0 L90.0,376.0 L95.0,377.0 L98.5,430.0 L101.8,330.0 L104.5,197.0 L106.0,376.0 L111.0,389.0 L114.5,377.0 L116.5,378.0 L120.5,429.0 L124.5,376.0 L130.0,376.0 L133.0,430.0 L136.5,375.5 L140.4,408.0 L145.0,376.0 L148.5,430.5 L152.2,390.0 L154.0,360.0 L156.5,300.0 L158.6,157.0 L162.0,157.5 L166.0,159.5 L170.0,159.7 L175.0,159.0 L180.0,158.0 L184.0,158.5 L187.0,159.0 L190.0,159.5 L195.0,159.5 L200.0,159.0 L206.0,157.5 L210.0,158.8 L215.0,157.5 L220.0,158.8 L225.0,157.8 L228.0,156.8 L234.0,157.5 L238.5,158.0 L244.3,161.8 L247.0,157.5 L251.5,161.3 L262.0,161.5 L266.0,162.5 L270.0,160.5 L273.0,159.5 L276.0,161.5 L280.0,159.5 L284.0,161.5 L288.0,160.0 L292.0,161.5 L296.0,161.0 L300.0,161.5 L303.0,159.5 L306.0,158.2 L308.0,159.5 L311.0,158.2 L314.0,160.0 L318.0,159.5 L322.0,160.2 L327.0,159.5 L332.0,161.5 L337.0,160.0 L342.0,159.5 L346.0,160.0 L349.0,161.5 L354.0,159.5 L357.0,159.8 L362.0,161.5 L366.0,160.5 L368.0,162.0 L371.0,159.7 L375.0,161.5 L381.0,163.0 L387.0,161.0 L392.0,160.5 L396.0,160.0 L399.0,159.5 L402.0,160.5 L405.0,162.0 L409.0,161.0 L412.0,159.5 L416.0,161.0 L419.0,159.5 L423.0,160.0 L426.0,161.5 L430.0,160.0 L440.0,160.0 L444.0,161.5 L449.0,159.5 L452.0,161.5 L454.0,160.5 L458.0,162.0 L463.0,161.0 L465.0,162.0 L468.0,160.0 L484.0,160.0 L490.0,159.5 L493.0,161.0 L496.0,161.0 L500.0,159.5 L505.0,160.5 L508.0,161.5 L510.0,159.5 L514.0,161.5 L519.0,158.0 L522.0,159.5 L540.0,160.0 L543.0,161.0 L546.0,163.0 L548.5,162.0" fill="none" stroke="#33a0c6" stroke-width="1.05" stroke-linejoin="round"/>
  <rect x="32" y="117" width="41" height="10" fill="#000"/>
  <text x="33.5" y="125" font-family="Liberation Sans" font-size="7.3" fill="#a8a8a8">trial version</text>
</svg>
<div class="lbl" style="left:32px;top:109px;font-size:7px">MB/s</div>
<div class="lbl" style="left:538px;top:109px;font-size:7px">ms</div>
<div class="lbl" style="right:632px;top:112.5px">2000</div>
<div class="lbl" style="right:632px;top:196.8px">1500</div>
<div class="lbl" style="right:632px;top:281.0px">1000</div>
<div class="lbl" style="right:632px;top:365.3px">500</div>
<div class="lbl" style="left:552px;top:112.8px">4.00</div>
<div class="lbl" style="left:552px;top:197.1px">3.00</div>
<div class="lbl" style="left:552px;top:281.3px">2.00</div>
<div class="lbl" style="left:552px;top:365.6px">1.00</div>
<div class="a" style="left:31px;top:455px;width:1px;height:2px;background:#999"></div>
<div class="lbl" style="left:-8.3px;width:80px;text-align:center;top:457px">0</div>
<div class="a" style="left:83px;top:455px;width:1px;height:2px;background:#999"></div>
<div class="lbl" style="left:43.4px;width:80px;text-align:center;top:457px">200</div>
<div class="a" style="left:135px;top:455px;width:1px;height:2px;background:#999"></div>
<div class="lbl" style="left:95.2px;width:80px;text-align:center;top:457px">400</div>
<div class="a" style="left:186px;top:455px;width:1px;height:2px;background:#999"></div>
<div class="lbl" style="left:146.9px;width:80px;text-align:center;top:457px">600</div>
<div class="a" style="left:238px;top:455px;width:1px;height:2px;background:#999"></div>
<div class="lbl" style="left:198.6px;width:80px;text-align:center;top:457px">800</div>
<div class="a" style="left:290px;top:455px;width:1px;height:2px;background:#999"></div>
<div class="lbl" style="left:250.3px;width:80px;text-align:center;top:457px">1000</div>
<div class="a" style="left:342px;top:455px;width:1px;height:2px;background:#999"></div>
<div class="lbl" style="left:302.1px;width:80px;text-align:center;top:457px">1200</div>
<div class="a" style="left:393px;top:455px;width:1px;height:2px;background:#999"></div>
<div class="lbl" style="left:353.8px;width:80px;text-align:center;top:457px">1400</div>
<div class="a" style="left:445px;top:455px;width:1px;height:2px;background:#999"></div>
<div class="lbl" style="left:405.5px;width:80px;text-align:center;top:457px">1600</div>
<div class="a" style="left:497px;top:455px;width:1px;height:2px;background:#999"></div>
<div class="lbl" style="left:457.3px;width:80px;text-align:center;top:457px">1800</div>
<div class="a" style="left:549px;top:455px;width:1px;height:2px;background:#999"></div>
<div class="lbl" style="left:535.0px;top:457px">2000gB</div>

<!-- right panel -->
<div class="a" style="left:578px;top:103px;width:59px;height:19px;background:#e1e1e1;border:2px solid #0078d7"></div>
<div class="rp" style="left:598.5px;top:105.5px">Start</div>
<div class="hr" style="top:131px"></div>
<div class="a" style="left:575.5px;top:138.5px;width:9px;height:9px;border-radius:50%;border:1px solid #444;background:#fff"></div>
<div class="a" style="left:577.8px;top:140.8px;width:4.4px;height:4.4px;border-radius:50%;background:#222"></div>
<div class="rp" style="left:587px;top:137px">Read</div>
<div class="a" style="left:575.5px;top:153px;width:9px;height:9px;border-radius:50%;border:1px solid #444;background:#fff"></div>
<div class="rp" style="left:587px;top:151px">Write</div>
<div class="hr" style="top:166px"></div>
<div class="cb" style="left:576px;top:175px"></div>
<div class="rp" style="left:587px;top:173px">Short stroke</div>
<div class="a" style="left:576px;top:190px;width:49px;height:18px;border:1px solid #d8d8d8;background:#fff"></div>
<div class="a" style="left:613px;top:191px;width:11px;height:16px;background:#f4f4f4;border-left:1px solid #e0e0e0"><svg class="a" style="left:2px;top:3px" width="7" height="10" viewBox="0 0 7 10"><path d="M1.5 3 L3.5 1 L5.5 3Z M1.5 7 L3.5 9 L5.5 7Z" fill="#555"/></svg></div>
<div class="rp" style="left:579px;top:192px;color:#999">40</div>
<div class="rp" style="left:635px;top:192px">gB</div>
<div class="cb" style="left:576px;top:218px"><svg class="a" style="left:0;top:0" width="7" height="7" viewBox="0 0 7 7"><path d="M0.8 3 L2.8 5.5 L6.5 0.8" fill="none" stroke="#3a3a3a" stroke-width="1"/></svg></div>
<div class="rp" style="left:587px;top:217px">Transfer rate</div>
<div class="hr" style="top:230px"></div>
<div class="rp" style="left:576px;top:232px">Minimun</div>
<div class="box" style="top:246px"></div>
<div class="rp" style="left:576px;top:262px">Maximun</div>
<div class="box" style="top:276px"></div>
<div class="rp" style="left:576px;top:290px">Average</div>
<div class="box" style="top:303px"></div>
<div class="hr" style="top:323px"></div>
<div class="cb" style="left:576px;top:330px"><svg class="a" style="left:0;top:0" width="7" height="7" viewBox="0 0 7 7"><path d="M0.8 3 L2.8 5.5 L6.5 0.8" fill="none" stroke="#3a3a3a" stroke-width="1"/></svg></div>
<div class="rp" style="left:587px;top:328px">Access time</div>
<div class="box" style="top:342px"></div>
<div class="cb" style="left:576px;top:361px"><svg class="a" style="left:0;top:0" width="7" height="7" viewBox="0 0 7 7"><path d="M0.8 3 L2.8 5.5 L6.5 0.8" fill="none" stroke="#3a3a3a" stroke-width="1"/></svg></div>
<div class="rp" style="left:587px;top:358px">Burst rate</div>
<div class="box" style="top:373px"></div>
<div class="rp" style="left:576px;top:388px">CPU usage</div>
<div class="box" style="top:402px"></div>
<div class="rp" style="left:576px;top:427px">Number of</div>
<div class="a" style="left:576px;top:441px;width:62px;height:18px;border:1px solid #c8c8c8;background:#fff"></div>
<div class="a" style="left:626px;top:442px;width:11px;height:16px;background:#f0f0f0;border-left:1px solid #ddd"><svg class="a" style="left:1px;top:1px" width="9" height="14" viewBox="0 0 9 14"><rect x="0.5" y="0.5" width="8" height="6" fill="#eee" stroke="#ccc"/><rect x="0.5" y="7.5" width="8" height="6" fill="#eee" stroke="#ccc"/><path d="M2 5 L4.5 2.5 L7 5Z M2 9 L4.5 11.5 L7 9Z" fill="#222"/></svg></div>
<div class="rp" style="left:580px;top:442px">1</div>
<div class="a" style="left:576px;top:466px;width:43px;height:10px;background:#16b03c"></div>
<div class="rp" style="left:623px;top:465px">1/1</div>

<div class="mono" style="left:588px;top:246px;color:#2a9fdc">133.5 MB/s</div>
<div class="mono" style="left:586px;top:276px;color:#2a9fdc">1767.2 MB/s</div>
<div class="mono" style="left:586px;top:303px;color:#2a9fdc">1430.0 MB/s</div>
<div class="mono" style="left:593px;top:342px;color:#f0f040">0.034 ms</div>
<div class="mono" style="left:588px;top:373px;color:#fff">581.1 MB/s</div>
<div class="mono" style="left:603px;top:402px;color:#fff">1.3%</div>
</body></html>
